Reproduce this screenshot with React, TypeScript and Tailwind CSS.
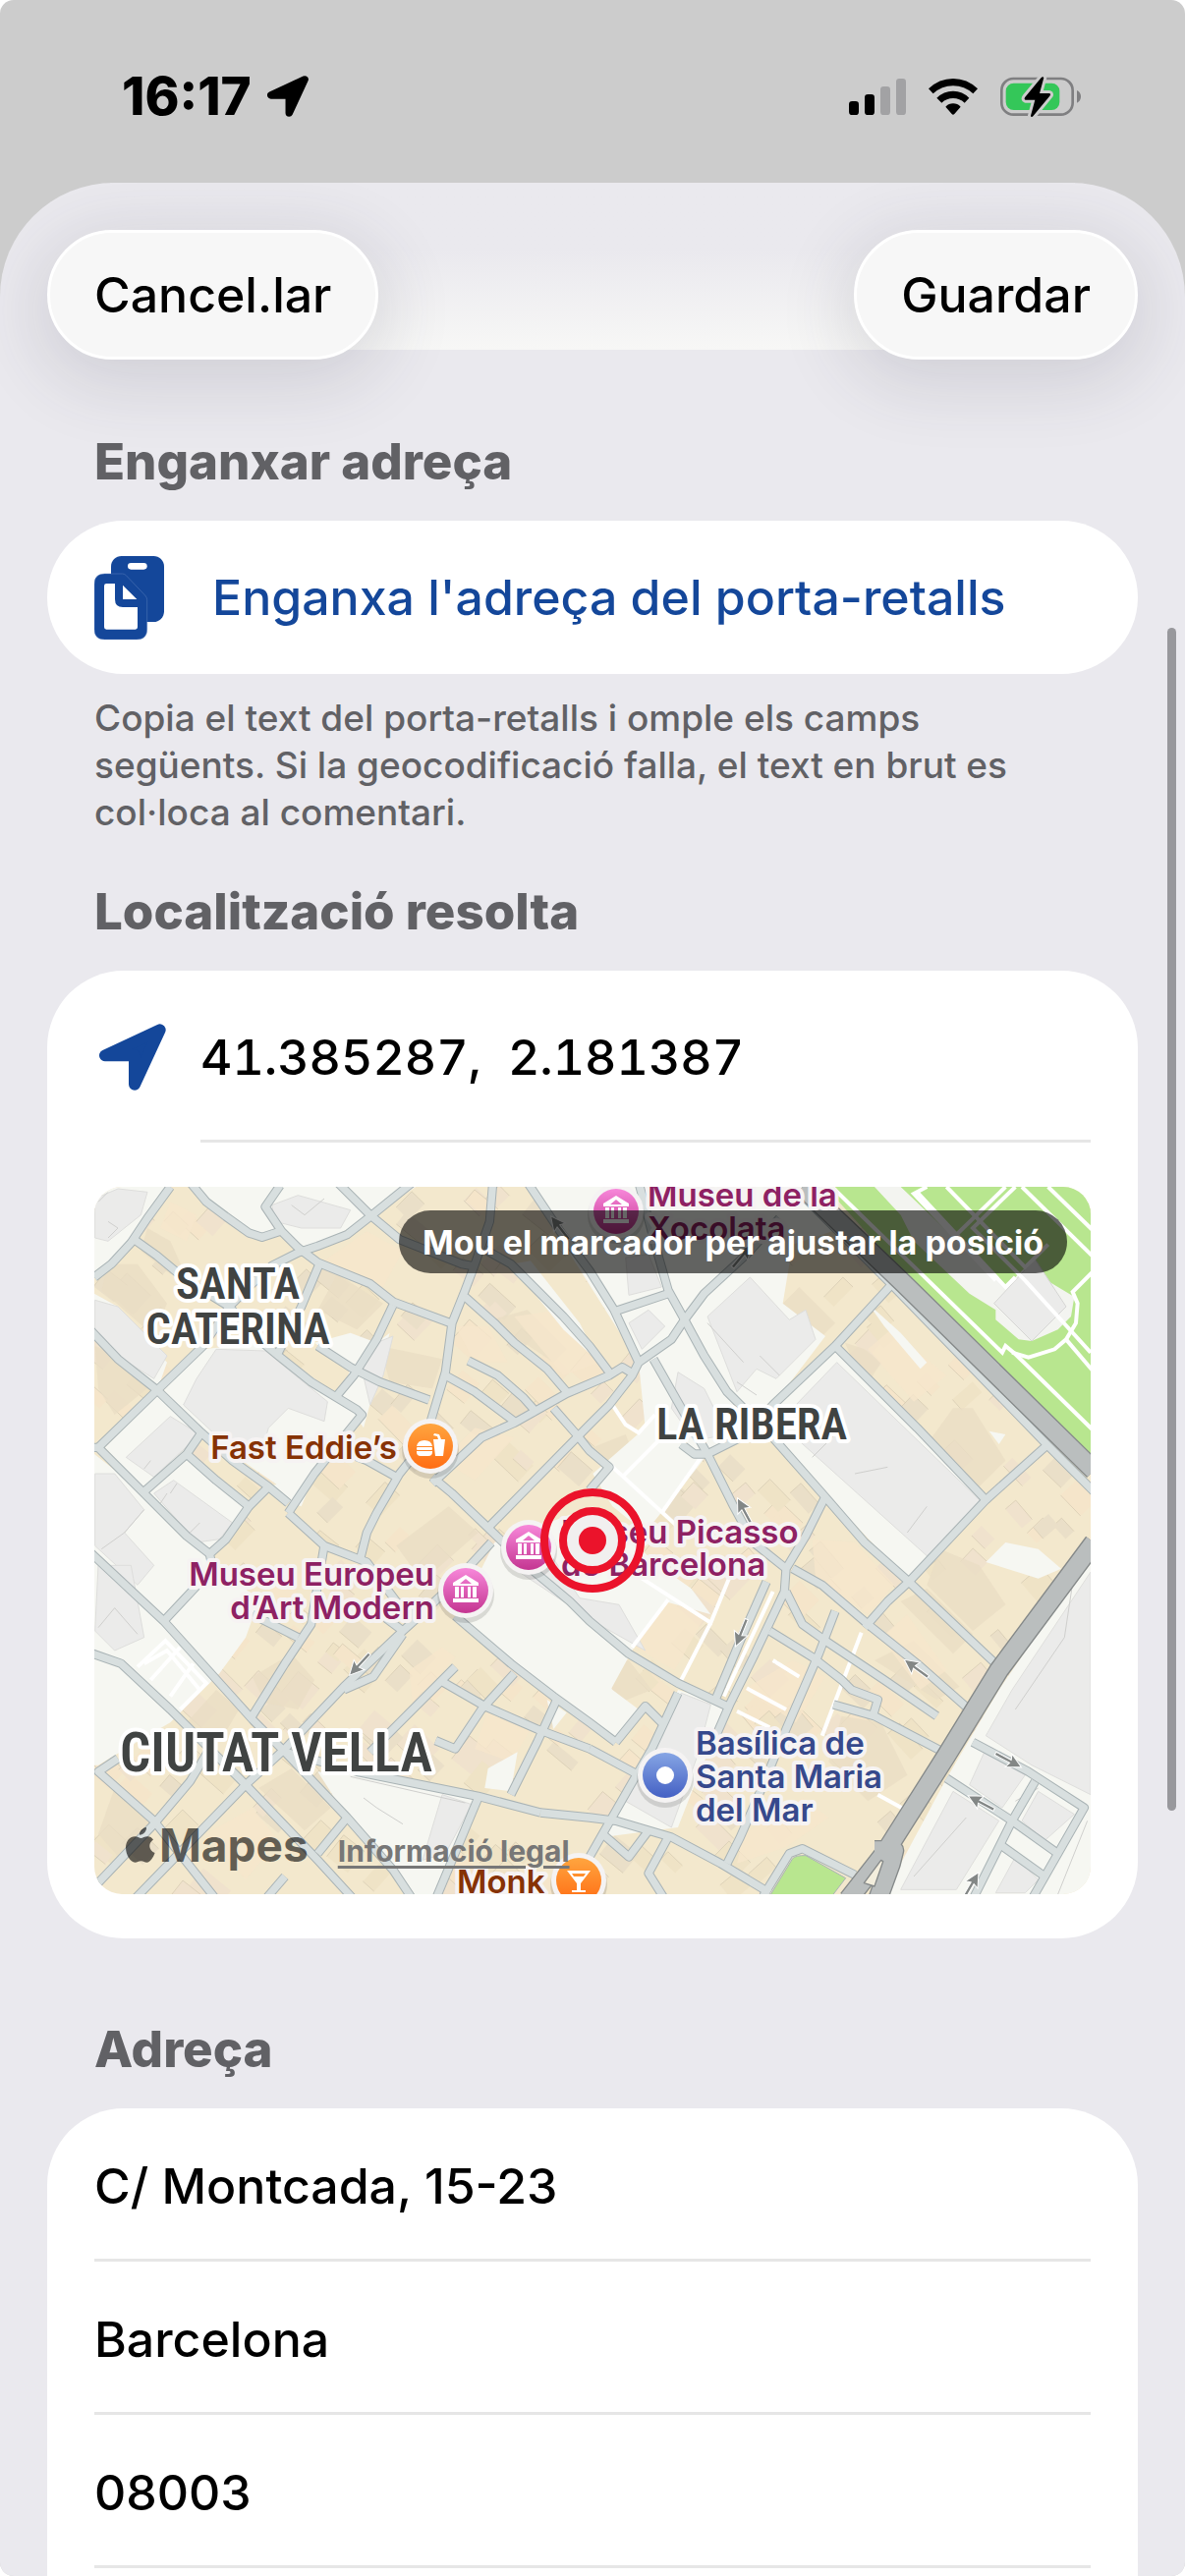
import type { ReactNode } from "react";

const sans = "font-['Inter','Liberation_Sans',sans-serif]";

/* ---------- icons ---------- */

function LocationArrow({ className }: { className: string }) {
  return (
    <svg viewBox="64 65 204 204" className={className} aria-hidden="true">
      <path
        d="M249 84 82 162H172V250Z"
        fill="currentColor"
        stroke="currentColor"
        strokeWidth="36"
        strokeLinejoin="round"
      />
    </svg>
  );
}

function PasteIcon() {
  return (
    <svg viewBox="48 48 213 255" className="h-[85px] w-[71px] shrink-0" aria-hidden="true">
      <rect x="99" y="48" width="162" height="201" rx="32" fill="#14479a" />
      <rect x="150" y="69" width="59" height="20" rx="10" fill="#fff" />
      <path
        d="M80 102H134Q140 102 145 107L203 168Q209 175 209 182V271Q209 303 177 303H80Q48 303 48 271V134Q48 102 80 102Z"
        fill="#14479a"
        stroke="#5b7fbd"
        strokeWidth="1.5"
      />
      <path
        d="M85 132H111V180Q111 204 135 204H180V265Q180 272 173 272H85Q78 272 78 265V139Q78 132 85 132Z"
        fill="#fff"
      />
      <path d="M135 137 178 180H135Z" fill="#fff" />
    </svg>
  );
}

function SignalIcon() {
  return (
    <svg viewBox="15 57 174 111" className="h-[37px] w-[58px]" aria-label="Cobertura" role="img">
      <rect x="15" y="126" width="30" height="42" rx="10" />
      <rect x="63" y="105" width="30" height="63" rx="10" />
      <rect x="111" y="81" width="30" height="87" rx="10" fill="#a2a2a4" />
      <rect x="159" y="57" width="30" height="111" rx="10" fill="#a2a2a4" />
    </svg>
  );
}

function WifiIcon() {
  return (
    <svg viewBox="257 57 150 111" className="h-[37px] w-[50px]" aria-label="Wi-Fi" role="img">
      <path d="M257 88Q289 57 332 57T407 88L393 103Q367 79 332 79T271 103Z" />
      <path d="M282 116Q303 95 332 95T381 116L367 131Q352 117 332 117T297 131Z" />
      <path d="M309 143Q319 133 332 133T355 143L336 165Q332 170 328 165Z" />
    </svg>
  );
}

function BatteryIcon() {
  const bolt =
    "M604 52Q608 52 606 58L594 102H624Q630 104 625 110L574 172Q568 177 567 170L580 122H551Q545 120 550 113L599 54Q601 52 604 52Z";
  return (
    <svg viewBox="474 51 246 123" className="h-[41px] w-[82px]" aria-label="Bateria carregant" role="img">
      <rect x="478" y="57" width="217" height="110" rx="36" fill="none" stroke="#7f7f81" strokeWidth="8" />
      <rect x="491" y="71" width="164" height="82" rx="24" fill="#34c759" />
      <path d="M708 93Q720 98 720 112T708 131Z" fill="#7f7f81" />
      <path d={bolt} stroke="#ccc" strokeWidth="18" strokeLinejoin="round" />
      <path d={bolt} />
    </svg>
  );
}

/* ---------- map data, drawn on a 3042 x 2160 plan ---------- */

const lanes = [
  "M250 24 180 120 130 195 70 260 18 300",
  "M310 10 360 70 420 115 490 165 530 178 585 160",
  "M585 20 540 85 590 160 640 210 700 255 860 320 930 375 1105 440",
  "M760 10 860 110 950 185 1140 260 1170 265",
  "M990 10 860 115 790 170 700 205 640 225 560 265 500 320 430 390 350 510 210 645 30 820",
  "M140 185 210 235 300 310 430 390 520 490 580 540 680 620 820 705 835 720 770 800 690 900 610 1020",
  "M705 260 650 390 580 530",
  "M700 510 800 575 890 620 1040 675",
  "M930 385 880 490 810 600 760 660",
  "M0 455 90 550 210 645 345 775 440 860 550 940 610 990",
  "M345 775 300 840 170 955",
  "M300 840 390 920 490 1000 550 940",
  "M490 1000 420 1100 370 1145 380 1190 230 1350",
  "M0 820 30 820 90 880 170 960 300 1090 370 1145",
  "M750 820 850 860 940 910",
  "M610 1020 720 1120 850 1170 940 1290 1010 1345",
  "M1235 10 1225 130 1180 260 1150 340 1110 440 1090 590 1045 740 1030 800 950 900 880 1020 850 1080 830 1160",
  "M1340 10 1440 160 1530 280 1605 400 1680 560",
  "M1210 215 1290 260 1370 340 1450 420 1530 510 1590 590",
  "M1150 360 1240 440 1300 500 1400 580 1460 650",
  "M1160 555 1250 600 1330 670 1370 715",
  "M1090 600 1180 650 1300 740",
  "M1050 930 1200 790 1300 745 1460 655 1590 600 1630 575 1655 590",
  "M1220 1065 1530 750 1590 690 1660 600 1680 560 1780 490 1820 430 1880 350 2010 230 2110 120",
  "M1050 910 1110 960 1220 1065 1350 1190 1470 1290 1530 1350 1650 1450 1800 1540 1950 1610",
  "M1420 700 1490 780 1530 830 1590 880 1530 950",
  "M1605 405 1770 350",
  "M1680 10 1730 200 1770 340 1820 430 1880 540 1950 650 2090 790 2240 960 2370 1110 2505 1230 2780 1490",
  "M1725 550 1890 840 1970 1000 2030 1110 2130 1190",
  "M1810 810 1850 840 1890 840 1990 790 2090 690 2280 510 2450 325",
  "M2280 510 2530 760 2740 980 2505 1230 2440 1290 2370 1370",
  "M2740 980 2930 810",
  "M2180 50 2450 320 2930 815 3070 955",
  "M2250 970 2190 1090 2130 1190 2125 1260 2030 1460 1960 1600 1890 1760",
  "M2150 1190 2240 1240 2380 1360 2530 1480 2700 1630",
  "M2130 1260 2180 1360 2250 1410 2430 1530 2590 1640",
  "M2080 1380 2210 1460 2300 1530 2330 1560 2410 1590 2395 1640",
  "M2275 1605 2400 1640 2620 1755",
  "M2280 1320 2230 1450 2130 1680 2060 1850 1990 2010 1950 2090",
  "M2070 1230 1990 1410 1910 1600",
  "M1800 1570 1720 1740 1650 1860 1570 2000 1530 2070",
  "M1610 1720 1700 1610 1750 1660",
  "M1530 1740 1670 1815",
  "M1380 1935 1530 1950 1610 1960 1780 2010 1930 2090 2080 2180",
  "M1770 2010 1710 2120 1760 2200",
  "M1570 2000 1650 2070 1710 1990",
  "M2060 2190 2140 2060 2180 2045 2340 2125",
  "M2700 1720 2870 1810 3040 1920 2880 2200",
  "M2620 1830 2820 1960 2960 2060",
  "M2890 1840 2820 1960 2700 2200",
  "M2780 2030 2920 2130",
  "M0 1135 230 1350 500 1650 600 1750 790 1950 930 2110 990 2200",
  "M0 1445 100 1480 250 1620 370 1740 480 1850 700 2080 810 2200",
  "M90 1770 30 1810 200 1960 390 2200",
  "M20 2160 200 1970 310 1840 370 1740",
  "M140 2200 480 1850 600 1740 780 1550 960 1380 1010 1335 1110 1240 1230 1110",
  "M780 1560 870 1520 960 1390",
  "M500 1640 600 1480 680 1360 720 1120",
  "M500 1330 640 1400",
  "M880 1320 960 1380",
  "M1120 1490 860 1750",
  "M1080 1535 1210 1610 1370 1680 1530 1740",
  "M1120 1335 1290 1480 1420 1580 1530 1660 1610 1720",
  "M1300 1510 1200 1620 1120 1740 1060 1715",
  "M1430 1590 1370 1720 1290 1880",
  "M600 1750 820 1810 1190 1885 1380 1935",
  "M1190 1890 1060 2200",
  "M790 1950 700 2060",
  "M600 2130 540 2200",
];

const pale = [
  "18,24 250,24 130,200 18,300",
  "310,24 1000,24 860,115 700,205 640,225 585,160 530,178 470,160",
  "1340,24 2190,24 2300,150 2150,200 2120,380 2250,480 2090,690 1890,840 1860,880 1700,1080 1600,1000 1540,900 1700,760 1680,560",
  "1290,260 1350,250 1500,440 1560,560 1450,460",
  "18,350 90,390 240,560 210,645 18,475",
  "350,520 540,500 820,705 835,730 690,900 600,950 345,775 230,645",
  "210,660 345,775 170,950 50,820",
  "690,500 800,470 880,500 920,470 870,650 840,760 770,660 800,580",
  "18,840 170,960 300,840 490,1000 370,1145 520,1290 480,1400 400,1510 250,1660 180,1700 30,1790 18,1790",
  "610,985 550,940 690,900 650,1000",
  "700,1810 820,1820 1190,1890 1060,2184 980,2184 790,1950",
  "1400,1590 1460,1630 1420,1680",
  "1220,1800 1310,1750 1290,1870 1210,1860",
  "2280,515 2740,980 2505,1230 2090,790 2110,690",
  "1240,1110 1540,1000 1740,1180 1840,1250 1900,1330 1760,1290 1660,1440 1540,1660 1420,1580 1130,1330",
  "1540,1480 1600,1560 1680,1620 1610,1720 1530,1640",
  "1800,1560 1960,1610 1870,1800 1800,1980 1570,2010 1720,1740",
  "2380,380 2480,470 2560,560 2540,580 2430,450",
  "2750,770 2800,780 2780,810",
  "2740,1170 2800,1110 2900,1130 2970,1190 2900,1220",
  "3060,1150 2780,1560 2620,1830 2430,2184 3060,2184",
];

const buildings = [
  "390,520 540,525 730,680 720,740 610,700 550,760 520,860 440,830 290,690 330,610",
  "250,725 340,780 200,910 115,850",
  "20,60 90,30 180,40 160,110 60,190 20,180",
  "560,80 640,50 800,95 770,150 650,150 570,130",
  "20,370 90,390 240,540 200,610 120,560 20,470",
  "830,560 880,500 930,480 900,600 860,690",
  "20,900 80,900 170,1010 110,1080 200,1180 150,1240 20,1120",
  "200,960 260,920 440,1050 400,1100 330,1110",
  "30,1180 130,1180 170,1400 80,1440 20,1380",
  "2285,560 2730,990 2570,1160 2170,800 2160,690",
  "1640,240 1710,230 1750,330 1650,355",
  "1890,420 2020,300 2140,430 2190,400 2220,490 2100,610 2040,580 1980,650",
  "1800,590 1880,640 1950,780 1850,800 1780,700",
  "1650,440 1710,400 1760,450 1690,520",
  "1300,1190 1400,1130 1500,1280 1620,1300 1700,1440 1540,1350",
  "1810,1570 1900,1605 1860,1760 1780,1980 1640,1900 1740,1700",
  "1080,1880 1170,1910 1090,2060 1020,2080",
  "2740,1740 2860,1820 2790,1920 2690,1850",
  "2640,1870 2780,1960 2650,2170 2480,2170",
  "2900,1870 3010,1940 2920,2020 2850,1960",
  "2830,2070 2900,2140 2860,2180 2770,2180",
  "2820,1560 3060,1200 3060,1880 2880,1790 2740,1700",
];

const toneA = [
  "60,260 150,260 240,380 200,480 40,340",
  "180,150 250,190 300,300 250,290 160,220",
  "890,510 1080,550 1050,640 920,620",
  "760,290 900,380 820,460 700,400",
  "20,510 120,550 180,640 80,720 30,640",
  "2120,380 2170,330 2280,440 2220,500",
  "2370,520 2420,560 2370,640 2310,500",
  "2640,700 2700,700 2800,860 2720,940 2560,810",
  "500,1520 620,1450 690,1530 640,1620 540,1600",
  "300,1660 390,1560 460,1620 400,1720",
  "80,1860 200,1960 100,2080 30,2000",
  "520,1860 620,1800 740,1920 660,1990",
  "1560,1480 1650,1470 1720,1560 1620,1600",
  "2300,1640 2420,1660 2500,1820 2380,1900 2260,1780",
  "2480,1290 2560,1250 2700,1390 2640,1450",
  "2400,1470 2520,1410 2660,1550 2590,1590",
  "2600,1130 2720,1180 2800,1300 2700,1380 2560,1240",
  "1540,820 1640,780 1680,880 1600,940",
  "1230,430 1340,400 1460,520 1420,560 1300,480",
  "940,1120 1100,1000 1190,1080 1020,1230",
];

const toneB = [
  "250,70 330,110 300,190 220,150",
  "720,250 850,160 960,220 900,330 760,280",
  "1300,420 1440,400 1560,560 1450,600",
  "1120,450 1220,450 1280,560 1180,560",
  "2380,520 2450,460 2620,600 2520,680",
  "560,1210 660,1200 620,1300 540,1280",
  "980,1500 1080,1430 1120,1460 990,1610",
  "1080,860 1180,760 1300,790 1180,920",
  "2210,1100 2340,1110 2460,1240 2380,1330 2220,1220",
  "2420,1400 2500,1330 2620,1500 2540,1560",
  "1740,1270 1880,1340 1790,1500 1670,1430",
  "1220,1620 1350,1680 1290,1780 1180,1740",
  "2000,1560 2150,1470 2250,1520 2160,1660",
  "2000,2000 2180,1890 2260,1950 2130,2040 1980,2090",
  "360,2000 500,1920 580,2020 480,2140",
];

const whitePaths = [
  "M2270 24 2790 530 2800 510 2830 535 3070 770",
  "M2530 40 2800 330 2830 300",
  "M2560 24 2520 45 2770 310",
  "M2830 24 2700 150 2860 310 3060 530",
  "M2620 24 2860 270 2930 200",
  "M2850 24 3070 240",
  "M2930 24 3070 160",
  "M3070 280 3005 345 3020 380 3015 440 2985 490 2950 520 2870 545 2820 530",
  "M2985 490 3070 590",
  "M2800 24 2640 180",
  "M1600 690 1640 750 1680 775 1730 720",
  "M1590 870 1830 1090",
  "M1870 850 1750 1020",
  "M1740 800 1630 910",
  "M1690 1220 1900 1355 1960 1210",
  "M1770 1285 1660 1430",
  "M1900 1355 1810 1530",
  "M2090 1260 1940 1580",
  "M2010 1555 2130 1620",
  "M2090 1470 2170 1520",
  "M1980 1625 2080 1675",
  "M2360 1385 2240 1700",
  "M2410 1880 2500 1930",
  "M150 1490 235 1410 360 1540 280 1620",
  "M170 1480 240 1440 340 1560",
  "M190 1530 280 1430",
  "M250 1580 320 1480",
];

/* Repeatable pseudo-random sequence for roof outlines. */
function makeRoofs() {
  let seed = 7;
  const next = () => {
    seed = (seed * 16807) % 2147483647;
    return seed / 2147483647;
  };
  const tones = ["#eadfc8", "#f5e5ca", "#efe3c6", "#f0e2cd"];
  return Array.from({ length: 420 }, (_, i) => {
    const x = next() * 3042;
    const y = next() * 2160;
    const w = 40 + next() * 70;
    const h = 30 + next() * 60;
    const a = (x > 1900 ? 43 : 38) + next() * 8;
    return { key: i, x, y, w, h, a, tone: tones[Math.floor(next() * 4)], open: next() > 0.45 };
  });
}
const roofs = makeRoofs();

/* One-way arrows: x, y, heading in degrees. */
const oneWay: [number, number, number][] = [
  [2003, 1015, -118],
  [828, 1482, 133],
  [1993, 1385, 112],
  [2528, 1495, -144],
  [2808, 1775, 28],
  [2726, 1905, -152],
  [2695, 2157, -60],
  [1440, 150, -128],
  [1995, 236, -50],
];

function Pin({ x, y, from, to, id, children }: { x: number; y: number; from: string; to: string; id: string; children: ReactNode }) {
  return (
    <g transform={`translate(${x} ${y})`}>
      <linearGradient id={id} x1="0" x2="0" y1="0" y2="1">
        <stop offset="0" stopColor={from} />
        <stop offset="1" stopColor={to} />
      </linearGradient>
      <circle cy="4" r="29" fill="#000" opacity=".12" />
      <circle r="28" fill="#f5f3f3" />
      <circle r="23" fill={`url(#${id})`} />
      {children}
    </g>
  );
}

function MuseumPin({ x, y, id }: { x: number; y: number; id: string }) {
  return (
    <Pin x={x} y={y} id={id} from="#f788da" to="#c43591">
      <g fill="#fff">
        <path d="M0-16 13-8V-5H-13V-8ZM0-12-6-7H6Z" fillRule="evenodd" />
        <path d="M-11-4h4V7h-4zM-5-4h3V7h-3zM2-4h3V7H2zM7-4h4V7H7zM-13 8h26v4h-26z" />
      </g>
    </Pin>
  );
}

function MapDrawing() {
  const label = { paintOrder: "stroke" as const, strokeLinejoin: "round" as const };
  return (
    <svg viewBox="0 0 1014 720" className="block h-full w-full" preserveAspectRatio="xMidYMid slice" role="img" aria-label="Mapa de Ciutat Vella, Barcelona">
      <rect width="1014" height="720" fill="#f3e8cd" />
      <svg width="1014" height="720" viewBox="18 24 3042 2160" fill="none">
        {roofs.map((r) => (
          <g key={r.key} transform={`translate(${r.x} ${r.y}) rotate(${r.a})`}>
            <rect width={r.w} height={r.h} fill={r.tone} />
            <path d={r.open ? `M0 ${r.h}V0H${r.w}` : `M0 ${r.h}H${r.w}`} stroke="#d5cab2" strokeWidth="2" />
          </g>
        ))}
        {toneA.map((p) => <polygon key={p} points={p} fill="#eaddc4" opacity=".8" />)}
        {toneB.map((p) => <polygon key={p} points={p} fill="#f6e6cc" opacity=".8" />)}
        {pale.map((p) => <polygon key={p} points={p} fill="#f6f7f2" />)}
        {buildings.map((p) => <polygon key={p} points={p} fill="#ebebea" stroke="#dededc" strokeWidth="3" />)}
        <g stroke="#cfcfcd" strokeWidth="3">
          <path d="M30 70 60 40M60 130 90 150 60 180M620 80 660 110 720 60M170 885 190 860M220 990 240 960M250 960 270 930M310 1080 340 1050M40 1130 110 1080 170 1010M30 1370 80 1310 150 1390M2210 850 2300 760M2340 900 2440 880M2500 1080 2560 1000M1830 740 1860 700M1890 440 2000 560M1980 620 2040 660M2050 540 2110 600M2830 1900 2900 1860M2520 2130 2680 1950M3010 1200 2980 1400 2830 1620M3050 1960 2960 2184M840 1890 880 1920 960 1970M800 1825 1150 1905" />
        </g>
        <polygon points="2250,24 3060,24 3060,860 2490,290" fill="#b8e68f" />
        <polygon points="2400,24 2480,24 2800,330 2860,270 3010,360 3000,420 2960,460 2880,495 2840,490 2770,430 2770,400 2690,350 2520,190 2480,110" fill="#f3f4f0" />
        <polygon points="2890,245 2985,390 2880,495 2765,380" fill="#ebebea" stroke="#d6d6d4" strokeWidth="3" />
        <g stroke="#fff" strokeWidth="12">{whitePaths.map((d) => <path key={d} d={d} />)}</g>
        <g strokeLinejoin="round">
          <g stroke="#a9b3b5" strokeWidth="28">{lanes.map((d) => <path key={d} d={d} />)}</g>
          <g stroke="#d8dfdf" strokeWidth="22">{lanes.map((d) => <path key={d} d={d} />)}</g>
        </g>
        <path d="M2080 2190 2150 2075Q2160 2065 2190 2066L2312 2135 2270 2190Z" fill="#b8e68f" stroke="#a9b3b5" strokeWidth="3" />
        <g strokeLinejoin="round">
          <path d="M2180 24 2490 320 3070 890M3070 1110 2780 1500 2620 1760 2430 2060 2320 2200M2400 2050 2460 2050 2450 2090 2410 2200" stroke="#858989" strokeWidth="62" />
          <path d="M2180 24 2490 320 3070 890M3070 1110 2780 1500 2620 1760 2430 2060 2320 2200M2400 2050 2460 2050 2450 2090 2410 2200" stroke="#babebe" strokeWidth="54" />
          <path d="M2420 2080 2426 2084 2400 2160 2368 2150Z" fill="#f3eedd" stroke="#858989" strokeWidth="4" />
        </g>
        {oneWay.map(([x, y, a]) => (
          <g key={x} transform={`translate(${x} ${y}) rotate(${a})`} stroke="#fff" strokeWidth="3" fill="#838786">
            <path d="M-44-5H8L2-22 46 0 2 22 8 5H-44Z" />
          </g>
        ))}
      </svg>

      <g className="font-['Roboto_Condensed','Roboto',sans-serif]" fontWeight="600" fill="#404342" stroke="#fff" strokeWidth="8" style={label}>
        <text x="146" y="114" fontSize="45" textAnchor="middle">SANTA</text>
        <text x="146" y="160" fontSize="45" textAnchor="middle">CATERINA</text>
        <text x="572" y="257" fontSize="45">LA RIBERA</text>
        <text x="26" y="595" fontSize="55">CIUTAT VELLA</text>
      </g>

      <g className="font-['Inter',sans-serif]" fontWeight="600" fontSize="33" stroke="#f6f3f3" strokeWidth="8" style={label}>
        <text x="308" y="277" textAnchor="end" fill="#863204">Fast Eddie’s</text>
        <g fill="#8e2163">
          <text x="563" y="20">Museu de la</text>
          <text x="563" y="54">Xocolata</text>
          <text x="346" y="406" textAnchor="end">Museu Europeu</text>
          <text x="346" y="440" textAnchor="end">d’Art Modern</text>
          <text x="475" y="363">Museu Picasso</text>
          <text x="475" y="396">de Barcelona</text>
        </g>
        <g fill="#36498c">
          <text x="612" y="578">Basílica de</text>
          <text x="612" y="612">Santa Maria</text>
          <text x="612" y="646">del Mar</text>
        </g>
        <text x="369" y="719" fill="#863204">Monk</text>
      </g>

      <Pin x={342} y={264} id="pinFood" from="#ffa53f" to="#ff6d14">
        <g fill="#fff">
          <path d="M-14 0Q-13-6-6-6T2 0ZM-14 5H2V6Q2 10-2 10H-10Q-14 10-14 6Z" />
          <rect x="-14" y="1" width="16" height="3" rx="1" />
          <path d="M3-7H15L13 10H5ZM8-7 7-10 3-11 4-13 9-12 11-7Z" />
        </g>
      </Pin>
      <Pin x={493} y={706} id="pinBar" from="#ffa53f" to="#ff6d14">
        <path d="M-12-10H12L2 3V10H7V12H-7V10H-2V3ZM-7-7-5-4H5L7-7Z" fill="#fff" fillRule="evenodd" />
      </Pin>
      <Pin x={581} y={599} id="pinChurch" from="#86a5e4" to="#4460c4">
        <circle r="9" fill="#fff" />
      </Pin>
      <MuseumPin x={531} y={25} id="pinMuseumA" />
      <MuseumPin x={378} y={411} id="pinMuseumB" />
      <MuseumPin x={442} y={367} id="pinMuseumC" />

      <g fill="none" stroke="#eb132b" strokeWidth="8">
        <circle cx="507" cy="360" r="49" />
        <circle cx="507" cy="360" r="30" fill="#f1efef" />
        <circle cx="507" cy="360" r="14" fill="#eb132b" stroke="none" />
      </g>
    </svg>
  );
}

function AppleLogo() {
  return (
    <svg viewBox="0 0 30 36" className="h-9 w-[30px]" fill="currentColor" aria-hidden="true">
      <path d="M21 0c.4 3.700-3 7.800-7 7.700C13.600 4 17.200.400 21 0ZM28 12.500c-6 4-4.200 11.200 1.600 13.500C28 30.500 24.800 35.600 21.500 35.700c-2.400 0-3.200-1.400-6-1.400s-3.700 1.400-6 1.400C4.500 35.600 0 27.800 0 20.600 0 13.600 4.400 9.300 9.300 9.200c2.400 0 4.600 1.700 6.200 1.700s4-1.900 7-1.700c2 0 4.200 1.200 5.500 3.300Z" />
    </svg>
  );
}

/* ---------- layout ---------- */

function Heading({ children }: { children: ReactNode }) {
  return <h2 className="mb-[30px] px-12 text-[51px] leading-[60px] font-extrabold text-[#616165]">{children}</h2>;
}

const address = [
  { id: "street", label: "Carrer", value: "C/ Montcada, 15-23" },
  { id: "city", label: "Ciutat", value: "Barcelona" },
  { id: "postcode", label: "Codi postal", value: "08003" },
  { id: "province", label: "Província", value: "" },
];

const glassButton =
  "relative h-[132px] rounded-full border-[3px] border-white bg-[#f7f7f7] px-[45px] text-[50px] font-medium shadow-[0_16px_70px_10px_rgba(60,60,80,0.14)]";

export default function App() {
  return (
    <div className={`relative flex h-screen w-full flex-col overflow-hidden rounded-[14px] bg-[#cccccc] text-black ${sans}`}>
      <div className="flex h-[186px] shrink-0 items-center justify-between pt-[10px] pr-[106px] pl-[124px]">
        <div className="flex items-center gap-4">
          <time className="text-[53px] leading-[60px] font-extrabold">16:17</time>
          <LocationArrow className="size-[42px]" />
        </div>
        <div className="flex items-center gap-[23px]">
          <SignalIcon />
          <WifiIcon />
          <BatteryIcon />
        </div>
      </div>

      <main className="relative flex-1 overflow-hidden rounded-t-[116px] bg-[#eae9ee] px-12">
        <div className="absolute inset-x-28 top-0 h-[170px] bg-linear-to-b from-[#eae9ee] from-40% to-[#f7f7f6]" />
        <header className="relative flex justify-between pt-12">
          <button type="button" className={glassButton}>Cancel.lar</button>
          <button type="button" className={glassButton}>Guardar</button>
        </header>

        <section className="relative mt-[74px]">
          <Heading>Enganxar adreça</Heading>
          <button type="button" className="flex h-[156px] w-full items-center gap-[49px] rounded-[78px] bg-white px-12 text-[50px] font-medium text-[#14479a]">
            <PasteIcon />
            Enganxa l'adreça del porta-retalls
          </button>
          <p className="mt-[21px] px-12 text-[37px] leading-[48px] font-medium text-[#616165]">
            Copia el text del porta-retalls i omple els camps
            <br />
            següents. Si la geocodificació falla, el text en brut es
            <br />
            col·loca al comentari.
          </p>
        </section>

        <section className="mt-[47px]">
          <Heading>Localització resolta</Heading>
          <div className="rounded-[78px] bg-white px-12 pb-[45px]">
            <div className="flex items-center">
              <div className="w-[108px] shrink-0 pl-[5px]">
                <LocationArrow className="size-[68px] text-[#14479a]" />
              </div>
              <div className="flex h-[175px] flex-1 items-center border-b-[3px] border-[#e6e6e6] pt-1 text-[50px] font-medium whitespace-pre tabular-nums">
                {"41.385287,  2.181387"}
              </div>
            </div>
            <div className="relative mt-[45px] h-[720px] overflow-hidden rounded-[28px]">
              <MapDrawing />
              <div className="absolute top-6 right-6 flex h-16 items-center rounded-full bg-black/60 px-6 text-[34px] font-bold text-white">
                Mou el marcador per ajustar la posició
              </div>
              <div className="absolute bottom-[22px] left-8 flex items-end gap-[30px]">
                <div className="flex items-center gap-1 text-[46px] leading-[56px] font-bold text-black/60">
                  <AppleLogo />
                  Mapes
                </div>
                <a href="#legal" className="pb-1 text-[30px] leading-9 font-bold text-[#777777] underline decoration-[3px] underline-offset-4">
                  Informació legal
                </a>
              </div>
            </div>
          </div>
        </section>

        <section className="mt-[83px]">
          <Heading>Adreça</Heading>
          <div className="rounded-t-[78px] bg-white px-12">
            {address.map((f) => (
              <div key={f.id} className="h-[156px] border-b-[3px] border-[#e6e6e6]">
                <label htmlFor={f.id} className="sr-only">{f.label}</label>
                <input id={f.id} defaultValue={f.value} className="h-full w-full bg-transparent pt-1 text-[50px] font-medium outline-none" />
              </div>
            ))}
          </div>
        </section>
      </main>

      <div className="absolute top-[639px] right-[9px] h-[1204px] w-[9px] rounded-full bg-[#98989c]" />
    </div>
  );
}
